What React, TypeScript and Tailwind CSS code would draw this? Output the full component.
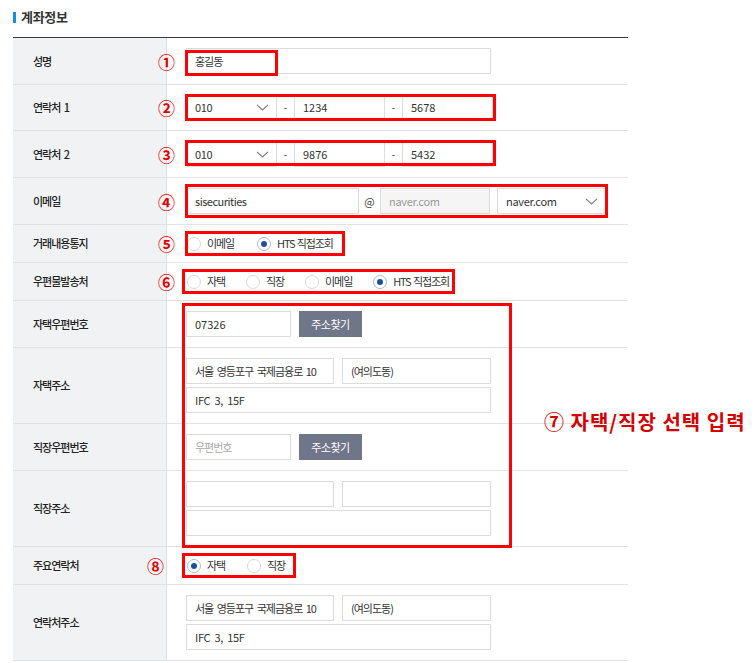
import React from "react";

const FONT = { fontFamily: '"Noto Sans CJK KR", "Noto Sans", sans-serif' };

function Chevron() {
  return (
    <svg width="13" height="7" viewBox="0 0 13 7" fill="none">
      <polyline points="1,0.8 6.5,6 12,0.8" stroke="#7a7a7a" strokeWidth="1.1" />
    </svg>
  );
}

function Radio({ checked, label }: { checked?: boolean; label: string }) {
  return (
    <div className="flex items-center">
      <span
        className={`w-[14px] h-[14px] rounded-full border bg-white flex items-center justify-center ${
          checked ? "border-[#aebbd2]" : "border-[#d9d9d9]"
        }`}
      >
        {checked && <span className="w-[6px] h-[6px] rounded-full bg-[#1f4e9e]" />}
      </span>
      <span className="ml-[6px] text-[11px] text-[#333] tracking-[-1.1px] [word-spacing:1px] whitespace-nowrap">{label}</span>
    </div>
  );
}

function Box({ className }: { className: string }) {
  return <div className={`absolute border-[3px] border-[#ff0000] pointer-events-none ${className}`} />;
}

function Mark({ n, className }: { n: string; className: string }) {
  return (
    <div className={`absolute inset-y-0 flex items-center text-[17px] font-bold text-[#e00000] leading-none ${className}`}>
      {n}
    </div>
  );
}

function Row({
  label,
  h,
  children,
  col,
}: {
  label: string;
  h: string;
  children?: React.ReactNode;
  col?: boolean;
}) {
  return (
    <div className={`relative flex border-b border-[#e2e2e2] ${h}`}>
      <div className="w-[154px] shrink-0 bg-[#f1f2f4] border-r border-[#dedede] flex items-center pl-[20px] text-[11px] font-medium text-[#222] tracking-[-1px] [word-spacing:2px] whitespace-nowrap">
        {label}
      </div>
      <div className={`flex-1 flex pl-[19px] ${col ? "flex-col justify-center gap-[3px]" : "items-center"}`}>
        {children}
      </div>
    </div>
  );
}

function Field({
  w,
  children,
  extra = "",
}: {
  w: string;
  children?: React.ReactNode;
  extra?: string;
}) {
  return (
    <div
      className={`h-[26px] shrink-0 border border-[#dcdcdc] flex items-center px-[8px] text-[11px] text-[#333] whitespace-nowrap overflow-hidden [word-spacing:2px] ${w} ${extra}`}
    >
      {children}
    </div>
  );
}

function SelectField({ w, value }: { w: string; value: string }) {
  return (
    <div
      className={`h-[26px] shrink-0 border border-[#dcdcdc] bg-white flex items-center justify-between pl-[8px] pr-[7px] text-[11px] text-[#333] tracking-[-0.3px] ${w}`}
    >
      <span>{value}</span>
      <Chevron />
    </div>
  );
}

function Dash() {
  return <div className="w-[17px] shrink-0 text-center text-[11px] text-[#555]">-</div>;
}

function FindButton() {
  return (
    <div className="ml-[8px] w-[63px] h-[26px] bg-[#6f768a] text-white text-[11px] tracking-[-0.5px] flex items-center justify-center">
      주소찾기
    </div>
  );
}

export default function App() {
  return (
    <div className="w-[755px] h-[663px] bg-white" style={FONT}>
      <div className="pl-[13px] pt-[9px] h-[25px] flex items-center">
        <span className="w-[3px] h-[11px] bg-[#1a8fd8]" />
        <span className="ml-[5px] text-[13px] font-bold text-[#333] leading-[16px] tracking-[-0.3px]">계좌정보</span>
      </div>
      <div className="relative ml-[13px] mt-[12px] w-[615px] border-t border-[#3a3a3a]">
        <Row label="성명" h="h-[47px]">
          <Field w="w-[305px]" extra="tracking-[-1px]">홍길동</Field>
          <Mark n="①" className="left-[145px]" />
          <Box className="left-[172px] top-[12px] w-[93px] h-[26px]" />
        </Row>
        <Row label="연락처 1" h="h-[46px]">
          <SelectField w="w-[91px]" value="010" />
          <Dash />
          <Field w="w-[91px]">1234</Field>
          <Dash />
          <Field w="w-[91px]">5678</Field>
          <Mark n="②" className="left-[145px]" />
          <Box className="left-[172px] top-[9px] w-[311px] h-[27px]" />
        </Row>
        <Row label="연락처 2" h="h-[47px]">
          <SelectField w="w-[91px]" value="010" />
          <Dash />
          <Field w="w-[91px]">9876</Field>
          <Dash />
          <Field w="w-[91px]">5432</Field>
          <Mark n="③" className="left-[145px]" />
          <Box className="left-[172px] top-[9px] w-[311px] h-[26px]" />
        </Row>
        <Row label="이메일" h="h-[47px]">
          <Field w="w-[173px]" extra="tracking-[-0.5px]">sisecurities</Field>
          <div className="w-[21px] shrink-0 text-center text-[11px] text-[#444]">@</div>
          <Field w="w-[110px]" extra="bg-[#f5f5f5] tracking-[-0.3px]">
            <span className="text-[#999]">naver.com</span>
          </Field>
          <div className="w-[7px] shrink-0" />
          <SelectField w="w-[109px]" value="naver.com" />
          <Mark n="④" className="left-[145px]" />
          <Box className="left-[172px] top-[6px] w-[423px] h-[34px]" />
        </Row>
        <Row label="거래내용통지" h="h-[38px]">
          <div className="flex items-center gap-[23px] pl-[1px]">
            <Radio label="이메일" />
            <Radio checked label="HTS 직접조회" />
          </div>
          <Mark n="⑤" className="left-[145px]" />
          <Box className="left-[172px] top-[6px] w-[160px] h-[25px]" />
        </Row>
        <Row label="우편물발송처" h="h-[38px]">
          <div className="flex items-center gap-[21px] pl-[1px]">
            <Radio label="자택" />
            <Radio label="직장" />
            <Radio label="이메일" />
            <Radio checked label="HTS 직접조회" />
          </div>
          <Mark n="⑥" className="left-[145px]" />
          <Box className="left-[169px] top-[6px] w-[273px] h-[25px]" />
        </Row>
        <Row label="자택우편번호" h="h-[47px]">
          <Field w="w-[105px]">07326</Field>
          <FindButton />
        </Row>
        <Row label="자택주소" h="h-[76px]" col>
          <div className="flex gap-[8px]">
            <Field w="w-[148px]" extra="tracking-[-1px]">서울 영등포구 국제금융로 10</Field>
            <Field w="w-[149px]" extra="tracking-[-1px]">(여의도동)</Field>
          </div>
          <Field w="w-[305px]" extra="tracking-[-0.3px]">IFC 3, 15F</Field>
        </Row>
        <Row label="직장우편번호" h="h-[47px]">
          <Field w="w-[105px]" extra="tracking-[-1px]">
            <span className="text-[#aaa]">우편번호</span>
          </Field>
          <FindButton />
        </Row>
        <Row label="직장주소" h="h-[76px]" col>
          <div className="flex gap-[8px]">
            <Field w="w-[148px]" />
            <Field w="w-[149px]" />
          </div>
          <Field w="w-[305px]" />
        </Row>
        <Row label="주요연락처" h="h-[38px]">
          <div className="flex items-center gap-[22px] pl-[1px]">
            <Radio checked label="자택" />
            <Radio label="직장" />
          </div>
          <Mark n="⑧" className="left-[134px]" />
          <Box className="left-[169px] top-[6px] w-[114px] h-[25px]" />
        </Row>
        <Row label="연락처주소" h="h-[76px]" col>
          <div className="flex gap-[8px]">
            <Field w="w-[148px]" extra="tracking-[-1px]">서울 영등포구 국제금융로 10</Field>
            <Field w="w-[149px]" extra="tracking-[-1px]">(여의도동)</Field>
          </div>
          <Field w="w-[305px]" extra="tracking-[-0.3px]">IFC 3, 15F</Field>
        </Row>

        <Box className="left-[169px] top-[265px] w-[330px] h-[245px]" />
        <div className="absolute left-[531px] top-[371px] text-[20px] font-bold text-[#d40000] tracking-[1px] whitespace-nowrap leading-[26px]">
          ⑦ 자택/직장 선택 입력
        </div>
      </div>
    </div>
  );
}
